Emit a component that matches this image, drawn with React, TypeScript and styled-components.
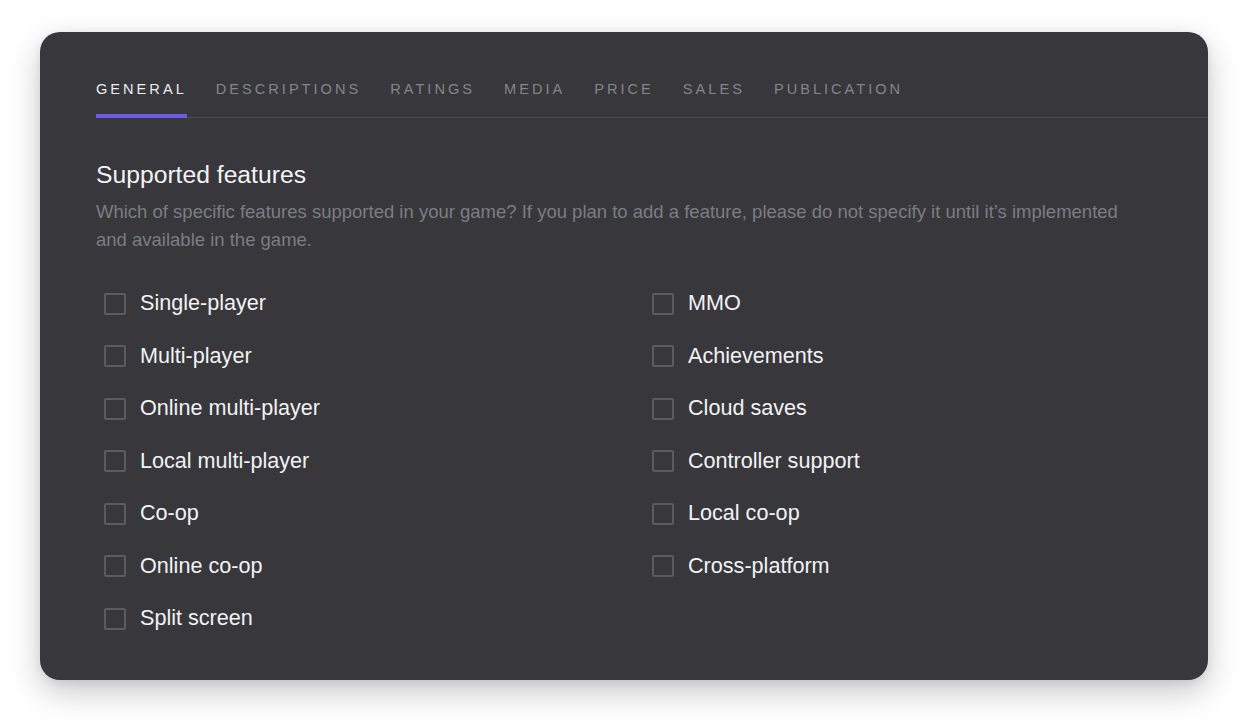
import React from "react";
import styled, { createGlobalStyle } from "styled-components";

const Global = createGlobalStyle`
  html, body { margin: 0; padding: 0; background: #ffffff; }
  body { font-family: "Liberation Sans", Arial, sans-serif; }
`;

const Page = styled.div`
  padding: 32px 40px 48px;
  box-sizing: border-box;
  width: 1248px;
`;

const Card = styled.div`
  background: #37373c;
  border-radius: 20px;
  height: 648px;
  box-sizing: border-box;
  padding: 47px 0 0 56px;
  box-shadow: 0 12px 32px rgba(0, 0, 0, 0.22), 0 2px 8px rgba(0, 0, 0, 0.08);
  overflow: hidden;
  font-family: "Liberation Sans", Arial, sans-serif;
`;

const TabBar = styled.nav`
  display: flex;
  gap: 29px;
  border-bottom: 1px solid #4d4d52;
`;

const Tab = styled.div<{ $active?: boolean }>`
  font-size: 14.6px;
  line-height: 20px;
  letter-spacing: 3px;
  text-transform: uppercase;
  color: ${(p) => (p.$active ? "#ececee" : "#84858b")};
  padding-bottom: 15px;
  border-bottom: 4px solid ${(p) => (p.$active ? "#6c5ce7" : "transparent")};
  margin-bottom: -1px;
`;

const Section = styled.section`
  padding: 41px 56px 0 0;
`;

const Heading = styled.h2`
  margin: 0;
  font-size: 24.7px;
  line-height: 32px;
  font-weight: 400;
  color: #f3f3f5;
`;

const Description = styled.p`
  margin: 7px 0 0;
  font-size: 18.5px;
  line-height: 28px;
  color: #7c7d83;
  max-width: 1040px;
`;

const Grid = styled.div`
  display: grid;
  grid-template-columns: 1fr 1fr;
  grid-template-rows: repeat(7, 24px);
  column-gap: 40px;
  row-gap: 28.5px;
  margin-top: 37px;
`;

const Option = styled.label<{ $col: number; $row: number }>`
  grid-column: ${(p) => p.$col};
  grid-row: ${(p) => p.$row};
  display: flex;
  align-items: center;
  gap: 14px;
  padding-left: 8px;
  font-size: 21.6px;
  line-height: 24px;
  color: #f2f2f4;
  cursor: pointer;
`;

const Box = styled.span`
  width: 22px;
  height: 22px;
  box-sizing: border-box;
  border: 2px solid #5b5b61;
  border-radius: 2px;
  flex-shrink: 0;
  margin-top: 1px;
`;

const tabs = ["General", "Descriptions", "Ratings", "Media", "Price", "Sales", "Publication"];

const left = [
  "Single-player",
  "Multi-player",
  "Online multi-player",
  "Local multi-player",
  "Co-op",
  "Online co-op",
  "Split screen",
];
const right = [
  "MMO",
  "Achievements",
  "Cloud saves",
  "Controller support",
  "Local co-op",
  "Cross-platform",
];

export default function App() {
  return (
    <Page>
      <Global />
      <Card>
        <TabBar>
          {tabs.map((t, i) => (
            <Tab key={t} $active={i === 0}>
              {t}
            </Tab>
          ))}
        </TabBar>
        <Section>
          <Heading>Supported features</Heading>
          <Description>
            Which of specific features supported in your game? If you plan to add a feature, please do not
            specify it until it’s implemented and available in the game.
          </Description>
          <Grid>
            {left.map((l, i) => (
              <Option key={l} $col={1} $row={i + 1}>
                <Box />
                {l}
              </Option>
            ))}
            {right.map((l, i) => (
              <Option key={l} $col={2} $row={i + 1}>
                <Box />
                {l}
              </Option>
            ))}
          </Grid>
        </Section>
      </Card>
    </Page>
  );
}
